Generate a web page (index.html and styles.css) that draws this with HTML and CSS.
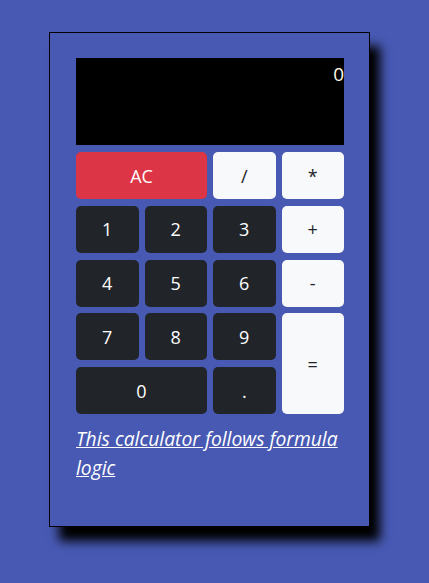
FILE: index.html
```html
<!DOCTYPE html>
<html>
<head>
<meta charset="utf-8">
<link rel="stylesheet" href="styles.css">
</head>
<body>
<div class="calc">
  <div class="display">0</div>
  <div class="keys">
    <button class="btn red wide">AC</button>
    <button class="btn light">/</button>
    <button class="btn light">*</button>
    <button class="btn dark">1</button>
    <button class="btn dark">2</button>
    <button class="btn dark">3</button>
    <button class="btn light">+</button>
    <button class="btn dark">4</button>
    <button class="btn dark">5</button>
    <button class="btn dark">6</button>
    <button class="btn light">-</button>
    <button class="btn dark">7</button>
    <button class="btn dark">8</button>
    <button class="btn dark">9</button>
    <button class="btn light tall">=</button>
    <button class="btn dark wide">0</button>
    <button class="btn dark">.</button>
  </div>
  <a class="note" href="#">This calculator follows formula logic</a>
</div>
</body>
</html>
```
FILE: styles.css
```css
html, body {
  margin: 0;
  padding: 0;
  background: #4759b3;
  font-family: "Open Sans", "Noto Sans", sans-serif;
}
body {
  padding: 32px 0 0 49px;
  height: 583px;
  box-sizing: border-box;
}
.calc {
  width: 268px;
  height: 443px;
  padding: 25px 25px 25px 26px;
  background: #4759b3;
  border: 1px solid #000;
  box-shadow: 10px 14px 10px #000;
}
.display {
  height: 87px;
  background: #000;
  color: #fffbe8;
  font-size: 19px;
  text-align: right;
  line-height: 1;
  padding-top: 7px;
  box-sizing: border-box;
}
.keys {
  margin-top: 7px;
  display: grid;
  grid-template-columns: repeat(4, 1fr);
  grid-auto-rows: 47px;
  column-gap: 6px;
  row-gap: 6.75px;
}
.btn {
  border: none;
  border-radius: 5px;
  font-family: inherit;
  font-size: 18px;
  padding: 0;
}
.wide { grid-column: span 2; }
.tall { grid-row: span 2; }
.dark { background: #212529; color: #fff; }
.light { background: #f8f9fa; color: #212529; }
.red { background: #dc3545; color: #fff; }
.note {
  display: block;
  margin-top: 10px;
  color: #fff;
  font-style: italic;
  font-size: 19.3px;
  line-height: 29px;
  text-decoration: underline;
}
```
